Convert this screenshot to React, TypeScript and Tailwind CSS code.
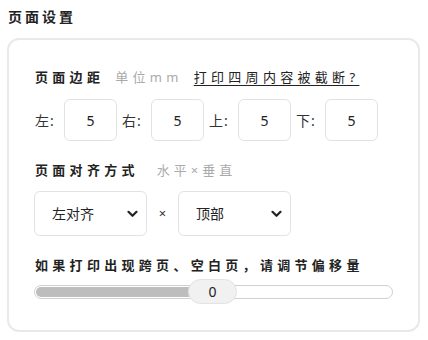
import React from "react";

const Chevron = () => (
  <svg width="11" height="8" viewBox="0 0 11 8" fill="none">
    <path d="M1.5 1.8 L5.5 5.8 L9.5 1.8" stroke="#222" strokeWidth="2.2" strokeLinecap="round" strokeLinejoin="round" />
  </svg>
);

function NumBox({ label, value, first }: { label: string; value: string; first?: boolean }) {
  return (
    <div className={`flex items-center ${first ? "" : "ml-[5px]"}`}>
      <span className="w-[29px] text-[14px] text-[#333] tracking-[1px]">{label}</span>
      <div className="w-[53px] h-[42px] border border-[#e2e2e2] rounded-[6px] flex items-center justify-center text-[14px] text-[#222]">
        {value}
      </div>
    </div>
  );
}

function SelectBox({ text }: { text: string }) {
  return (
    <div className="w-[113px] h-[45px] border border-[#e2e2e2] rounded-[6px] flex items-center justify-between pl-[17px] pr-[8px] text-[14px] text-[#222]">
      <span>{text}</span>
      <Chevron />
    </div>
  );
}

export default function App() {
  return (
    <div
      className="w-[428px] h-[340px] bg-white text-[#333]"
      style={{ fontFamily: '"Noto Sans", "Noto Sans CJK SC", sans-serif' }}
    >
      <div className="pl-[8px] pt-[8px] text-[14px] font-bold tracking-[3px] leading-[18px] text-[#222]">
        页面设置
      </div>
      <div className="ml-[7px] mt-[12px] w-[413px] h-[294px] border-2 border-[#e9e9e9] rounded-[12px] pl-[26px] pt-[28px]">
        <div className="flex items-center h-[20px] text-[13px] tracking-[4.3px]">
          <span className="font-bold text-[#222]">页面边距</span>
          <span className="ml-[11px] text-[#aaa]">单位mm</span>
          <span className="ml-[11px] text-[#222] underline underline-offset-[3px]">打印四周内容被截断?</span>
        </div>
        <div className="flex items-center mt-[11px]">
          <NumBox label="左:" value="5" first />
          <NumBox label="右:" value="5" />
          <NumBox label="上:" value="5" />
          <NumBox label="下:" value="5" />
        </div>
        <div className="flex items-center h-[20px] mt-[20px] text-[13px] tracking-[4.3px]">
          <span className="font-bold text-[#222]">页面对齐方式</span>
          <span className="ml-[18px] text-[#aaa] tracking-[4px]">水平×垂直</span>
        </div>
        <div className="flex items-center mt-[10px] -ml-[1px]">
          <SelectBox text="左对齐" />
          <span className="w-[31px] text-center text-[13px] text-[#333]">×</span>
          <SelectBox text="顶部" />
        </div>
        <div className="h-[20px] mt-[20px] flex items-center text-[13px] tracking-[4.3px] font-bold text-[#222]">
          如果打印出现跨页、空白页，请调节偏移量
        </div>
        <div className="relative mt-[3px] h-[25px] w-[359px] -ml-[1px] flex items-center">
          <div className="w-full h-[14px] rounded-full border border-[#d0d0d0] bg-white p-[1px] flex">
            <div className="w-[160px] h-full rounded-full bg-[#bdbdbd]" />
          </div>
          <div className="absolute left-[154px] top-0 w-[49px] h-[25px] rounded-full bg-[#f1f1f1] border border-[#e3e3e3] flex items-center justify-center text-[14px] text-[#222]">
            0
          </div>
        </div>
      </div>
    </div>
  );
}
